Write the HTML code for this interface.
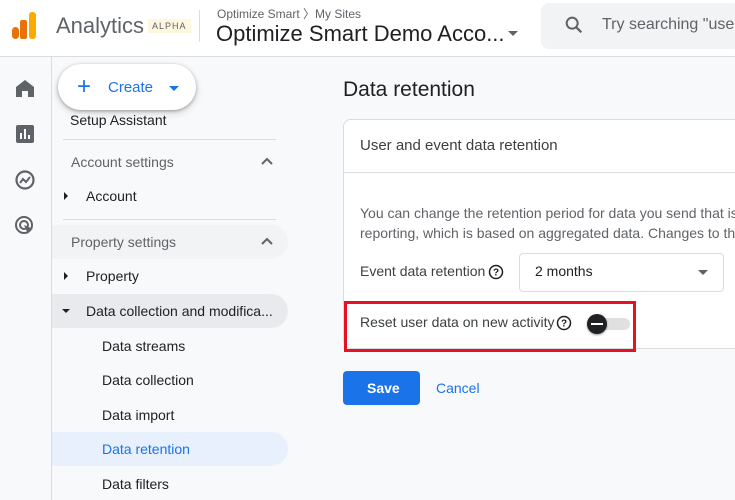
<!DOCTYPE html><html><head><style>
body{margin:0;width:735px;height:500px;overflow:hidden;background:#f8f9fa;font-family:"Liberation Sans",Arial,sans-serif;position:relative;color:#202124}
.a{position:absolute;white-space:nowrap}
.hdr{position:absolute;left:0;top:0;width:735px;height:56px;background:#fff;border-bottom:1px solid #dadce0}
.rail{position:absolute;left:0;top:57px;width:51px;height:443px;border-right:1px solid #dadce0;background:#f8f9fa}
.sep{position:absolute;left:63px;width:213px;height:1px;background:#dadce0}
.it{position:absolute;font-size:14px;color:#202124}
.sh{position:absolute;font-size:14px;color:#5f6368}
</style></head><body>
<div class="hdr">
 <div class="a" style="left:12px;top:27px;width:7px;height:12px;background:#e8710a;border-radius:4px"></div>
 <div class="a" style="left:20px;top:20px;width:7px;height:19px;background:#e8710a;border-radius:2px"></div>
 <div class="a" style="left:29px;top:12px;width:7px;height:27px;background:#f9ab00;border-radius:3px"></div>
 <div class="a" style="left:56px;top:13px;font-size:22px;color:#5f6368">Analytics</div>
 <div class="a" style="left:148px;top:19px;font-size:9px;letter-spacing:1px;background:#fef7e0;color:#5f6368;padding:2px 4px">ALPHA</div>
 <div class="a" style="left:199px;top:10px;width:1px;height:32px;background:#dadce0"></div>
 <div class="a" style="left:217px;top:5px;font-size:12px;color:#5f6368">Optimize Smart 〉My Sites</div>
 <div class="a" style="left:216px;top:21px;font-size:22px;color:#202124">Optimize Smart Demo Acco...</div>
 <div class="a" style="left:508px;top:31px;width:0;height:0;border-left:5px solid transparent;border-right:5px solid transparent;border-top:5px solid #5f6368"></div>
 <div class="a" style="left:541px;top:3px;width:200px;height:46px;background:#f1f3f4;border-radius:8px"></div>
 <svg class="a" style="left:563px;top:14px" width="22" height="22" viewBox="0 0 24 24"><circle cx="10" cy="10" r="6" fill="none" stroke="#5f6368" stroke-width="2.2"/><path d="M14.5 14.5L20 20" stroke="#5f6368" stroke-width="2.4"/></svg>
 <div class="a" style="left:602px;top:16px;font-size:16px;color:#5f6368">Try searching "use</div>
</div>
<div class="rail">
 <svg class="a" style="left:15px;top:22px" width="20" height="18" viewBox="0 0 20 18"><path d="M10 1L1 8v10h6v-6h6v6h6V8z" fill="#5f6368"/></svg>
 <svg class="a" style="left:16px;top:68px" width="18" height="18"><rect width="18" height="18" rx="2" fill="#5f6368"/><rect x="4" y="8" width="2" height="6" fill="#fff"/><rect x="8" y="4" width="2" height="10" fill="#fff"/><rect x="12" y="10" width="2" height="4" fill="#fff"/></svg>
 <svg class="a" style="left:14px;top:112px" width="22" height="22" viewBox="0 0 22 22"><circle cx="11" cy="11" r="8.5" fill="none" stroke="#5f6368" stroke-width="2.2"/><path d="M6 14l3-4 3 3 4-5" fill="none" stroke="#5f6368" stroke-width="2"/></svg>
 <svg class="a" style="left:14px;top:158px" width="22" height="22" viewBox="0 0 22 22"><circle cx="10" cy="10" r="8" fill="none" stroke="#5f6368" stroke-width="2"/><circle cx="10" cy="10" r="4" fill="none" stroke="#5f6368" stroke-width="2"/><path d="M10 10l9 4-4 1-1 4z" fill="#5f6368"/></svg>
</div>
<div class="it" style="left:70px;top:112px">Setup Assistant</div>
<div class="a" style="left:58px;top:64px;width:138px;height:46px;background:#fff;border-radius:24px;box-shadow:0 1px 3px rgba(0,0,0,.3),0 3px 8px rgba(0,0,0,.15)"></div>
<div class="a" style="left:77px;top:75px;font-size:24px;color:#1a73e8;line-height:24px;font-weight:300">+</div>
<div class="a" style="left:108px;top:79px;font-size:15px;color:#1a73e8">Create</div>
<div class="a" style="left:169px;top:86px;border-left:5px solid transparent;border-right:5px solid transparent;border-top:5px solid #1a73e8"></div>
<div class="sep" style="top:139px"></div>
<div class="sh" style="left:71px;top:154px">Account settings</div>
<svg class="a" style="left:261px;top:157px" width="12" height="8"><path d="M1 7l5-5 5 5" fill="none" stroke="#5f6368" stroke-width="2"/></svg>
<div class="a" style="left:64px;top:192px;border-top:4px solid transparent;border-bottom:4px solid transparent;border-left:4px solid #202124"></div>
<div class="it" style="left:86px;top:188px">Account</div>
<div class="sep" style="top:219px"></div>
<div class="a" style="left:52px;top:225px;width:236px;height:34px;background:#f1f3f4;border-radius:0 17px 17px 0"></div>
<div class="sh" style="left:71px;top:234px">Property settings</div>
<svg class="a" style="left:261px;top:237px" width="12" height="8"><path d="M1 7l5-5 5 5" fill="none" stroke="#5f6368" stroke-width="2"/></svg>
<div class="a" style="left:64px;top:272px;border-top:4px solid transparent;border-bottom:4px solid transparent;border-left:4px solid #202124"></div>
<div class="it" style="left:86px;top:268px">Property</div>
<div class="a" style="left:52px;top:294px;width:236px;height:34px;background:#e8eaed;border-radius:0 17px 17px 0"></div>
<div class="a" style="left:62px;top:309px;border-left:4px solid transparent;border-right:4px solid transparent;border-top:4px solid #202124"></div>
<div class="it" style="left:86px;top:303px">Data collection and modifica...</div>
<div class="it" style="left:102px;top:338px">Data streams</div>
<div class="it" style="left:102px;top:372px">Data collection</div>
<div class="it" style="left:102px;top:407px">Data import</div>
<div class="a" style="left:52px;top:432px;width:236px;height:34px;background:#e8f0fe;border-radius:0 17px 17px 0"></div>
<div class="it" style="left:102px;top:441px;color:#1a73e8">Data retention</div>
<div class="it" style="left:102px;top:476px">Data filters</div>
<div class="a" style="left:343px;top:78px;font-size:21px;color:#202124">Data retention</div>
<div class="a" style="left:343px;top:119px;width:400px;height:228px;background:#fff;border:1px solid #dadce0;border-radius:8px"></div>
<div class="a" style="left:344px;top:172px;width:400px;height:1px;background:#dadce0"></div>
<div class="a" style="left:360px;top:137px;font-size:15px;color:#3c4043">User and event data retention</div>
<div class="a" style="left:360px;top:203px;font-size:14px;color:#5f6368;line-height:20px">You can change the retention period for data you send that is<br>reporting, which is based on aggregated data. Changes to the</div>
<div class="a" style="left:360px;top:263px;font-size:14px;color:#3c4043">Event data retention</div>
<svg class="a" style="left:488px;top:264px" width="16" height="16" viewBox="0 0 16 16"><circle cx="8" cy="8" r="6.5" fill="none" stroke="#202124" stroke-width="1.5"/><text x="8" y="11.5" font-size="10" text-anchor="middle" font-family="Liberation Sans" font-weight="bold" fill="#202124">?</text></svg>
<div class="a" style="left:519px;top:253px;width:203px;height:37px;border:1px solid #dadce0;border-radius:4px;background:#fff"></div>
<div class="a" style="left:535px;top:263px;font-size:14px;color:#202124">2 months</div>
<div class="a" style="left:698px;top:270px;border-left:5px solid transparent;border-right:5px solid transparent;border-top:5px solid #5f6368"></div>
<div class="a" style="left:344px;top:301px;width:292px;height:51px;border:3px solid #e81123;box-sizing:border-box"></div>
<div class="a" style="left:360px;top:314px;font-size:14px;color:#3c4043">Reset user data on new activity</div>
<svg class="a" style="left:556px;top:315px" width="16" height="16" viewBox="0 0 16 16"><circle cx="8" cy="8" r="6.5" fill="none" stroke="#202124" stroke-width="1.5"/><text x="8" y="11.5" font-size="10" text-anchor="middle" font-family="Liberation Sans" font-weight="bold" fill="#202124">?</text></svg>
<div class="a" style="left:596px;top:318px;width:34px;height:12px;background:#e0e0e0;border-radius:6px"></div>
<div class="a" style="left:587px;top:314px;width:20px;height:20px;background:#202124;border-radius:50%;box-shadow:0 1px 2px rgba(0,0,0,.4)"></div>
<div class="a" style="left:591px;top:323px;width:12px;height:2px;background:#fff"></div>
<div class="a" style="left:343px;top:371px;width:77px;height:34px;background:#1a73e8;border-radius:4px"></div>
<div class="a" style="left:367px;top:380px;font-size:14px;color:#fff;font-weight:bold">Save</div>
<div class="a" style="left:436px;top:380px;font-size:14px;color:#1a73e8">Cancel</div>
</body></html>
